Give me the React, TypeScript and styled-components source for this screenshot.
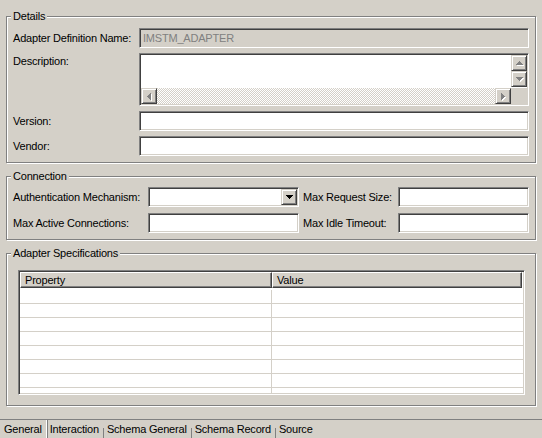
import styled, { createGlobalStyle } from 'styled-components';

const GlobalStyle = createGlobalStyle`
  html, body {
    margin: 0;
    padding: 0;
    background: #d4d0c8;
  }
  body {
    font-family: "Liberation Sans", Arial, sans-serif;
    font-size: 11px;
    letter-spacing: -0.2px;
    color: #000;
  }
`;

type Dir = 'up' | 'down' | 'left' | 'right';

const Arrow = ({ dir, color }: { dir: Dir; color: string }) => {
  const vertical = dir === 'up' || dir === 'down';
  const rects = [1, 3, 5, 7].map((w, i) => {
    const idx = dir === 'up' || dir === 'left' ? i : 3 - i;
    const off = (7 - w) / 2;
    return vertical ? (
      <rect key={i} x={off} y={idx} width={w} height={1} />
    ) : (
      <rect key={i} x={idx} y={off} width={1} height={w} />
    );
  });
  return (
    <svg
      width={vertical ? 7 : 4}
      height={vertical ? 4 : 7}
      viewBox={vertical ? '0 0 7 4' : '0 0 4 7'}
      fill={color}
      shapeRendering="crispEdges"
    >
      {rects}
    </svg>
  );
};

const rows = Array.from({ length: 8 });

const App = () => {
  return (
    <Page>
      <GlobalStyle />
      <Content>
        <Group $height={147}>
          <Caption>Details</Caption>
          <DetailsForm>
            <Label>Adapter Definition Name:</Label>
            <Field $disabled>IMSTM_ADAPTER</Field>
            <Label $top>Description:</Label>
            <Memo>
              <MemoText />
              <VScroll>
                <ScrollButton>
                  <Arrow dir="up" color="#808080" />
                </ScrollButton>
                <ScrollButton>
                  <Arrow dir="down" color="#808080" />
                </ScrollButton>
              </VScroll>
              <HScroll>
                <ScrollButton>
                  <Arrow dir="left" color="#808080" />
                </ScrollButton>
                <Track />
                <ScrollButton>
                  <Arrow dir="right" color="#808080" />
                </ScrollButton>
              </HScroll>
              <Corner />
            </Memo>
            <Label>Version:</Label>
            <Field />
            <Label>Vendor:</Label>
            <Field />
          </DetailsForm>
        </Group>

        <Group $height={64}>
          <Caption>Connection</Caption>
          <ConnectionForm>
            <Label>Authentication Mechanism:</Label>
            <Combo>
              <DropButton>
                <Arrow dir="down" color="#000" />
              </DropButton>
            </Combo>
            <Label $indent>Max Request Size:</Label>
            <Field />
            <Label>Max Active Connections:</Label>
            <Field />
            <Label $indent>Max Idle Timeout:</Label>
            <Field />
          </ConnectionForm>
        </Group>

        <Group $height={153}>
          <Caption>Adapter Specifications</Caption>
          <SpecsBody>
            <Table>
              <HeaderRow>
                <HeaderCell>Property</HeaderCell>
                <HeaderCell>Value</HeaderCell>
              </HeaderRow>
              <TableBody>
                {rows.map((_, i) => (
                  <Row key={i}>
                    <Cell $divider />
                    <Cell />
                  </Row>
                ))}
              </TableBody>
            </Table>
          </SpecsBody>
        </Group>
      </Content>

      <TabBar>
        <Tab $active>General</Tab>
        <Tab>Interaction</Tab>
        <TabSep />
        <Tab>Schema General</Tab>
        <TabSep />
        <Tab>Schema Record</Tab>
        <TabSep />
        <Tab>Source</Tab>
      </TabBar>
    </Page>
  );
};

export default App;

const Page = styled.div`
  width: 542px;
  height: 438px;
  display: flex;
  flex-direction: column;
  overflow: hidden;
`;

const Content = styled.div`
  flex: 1;
  display: flex;
  flex-direction: column;
  gap: 13px;
  padding: 16px 6px 0 6px;
`;

const Group = styled.section<{ $height: number }>`
  position: relative;
  box-sizing: border-box;
  height: ${(p) => p.$height}px;
  border: 1px solid #808080;
  box-shadow: inset 1px 1px 0 #fff, 1px 1px 0 #fff;
`;

const Caption = styled.span`
  position: absolute;
  top: -7px;
  left: 4px;
  padding: 0 2px;
  line-height: 13px;
  background: #d4d0c8;
  white-space: nowrap;
`;

const DetailsForm = styled.div`
  display: grid;
  grid-template-columns: 126px 1fr;
  grid-template-rows: 20px 53px 20px 20px;
  row-gap: 5px;
  padding: 11px 6px 6px 6px;
`;

const ConnectionForm = styled.div`
  display: grid;
  grid-template-columns: 135px 151px 99px 1fr;
  grid-template-rows: 20px 20px;
  row-gap: 6px;
  padding: 10px 6px 6px 6px;
`;

const Label = styled.div<{ $top?: boolean; $indent?: boolean }>`
  display: flex;
  align-items: ${(p) => (p.$top ? 'flex-start' : 'center')};
  padding-top: ${(p) => (p.$top ? '2px' : '0')};
  padding-left: ${(p) => (p.$indent ? '4px' : '0')};
  line-height: 13px;
  white-space: nowrap;
`;

const sunken = `
  box-sizing: border-box;
  border: 1px solid;
  border-color: #808080 #fff #fff #808080;
  box-shadow: inset 1px 1px 0 #404040, inset -1px -1px 0 #d4d0c8;
`;

const raised = `
  box-sizing: border-box;
  border: 1px solid;
  border-color: #d4d0c8 #404040 #404040 #d4d0c8;
  box-shadow: inset 1px 1px 0 #fff, inset -1px -1px 0 #808080;
  background: #d4d0c8;
`;

const Field = styled.div<{ $disabled?: boolean }>`
  ${sunken}
  display: flex;
  align-items: center;
  padding: 0 3px;
  background: ${(p) => (p.$disabled ? '#d4d0c8' : '#fff')};
  color: ${(p) => (p.$disabled ? '#808080' : '#000')};
  white-space: nowrap;
`;

const Memo = styled.div`
  ${sunken}
  display: grid;
  grid-template-columns: 1fr 16px;
  grid-template-rows: 1fr 16px;
  padding: 1px;
  background: #fff;
`;

const MemoText = styled.div`
  background: #fff;
`;

const VScroll = styled.div`
  display: flex;
  flex-direction: column;
`;

const HScroll = styled.div`
  display: flex;
`;

const Track = styled.div`
  flex: 1;
  background: repeating-conic-gradient(#fff 0 25%, #d4d0c8 0 50%) 0 0 / 2px 2px;
`;

const Corner = styled.div`
  background: #d4d0c8;
`;

const ScrollButton = styled.div`
  ${raised}
  width: 16px;
  height: 16px;
  flex-shrink: 0;
  display: flex;
  align-items: center;
  justify-content: center;

  svg {
    filter: drop-shadow(1px 1px 0 #fff);
  }
`;

const Combo = styled.div`
  ${sunken}
  display: flex;
  justify-content: flex-end;
  padding: 1px;
  background: #fff;
`;

const DropButton = styled.div`
  ${raised}
  width: 16px;
  height: 16px;
  display: flex;
  align-items: center;
  justify-content: center;
`;

const SpecsBody = styled.div`
  box-sizing: border-box;
  height: 100%;
  padding: 16px 10px 10px 11px;
`;

const Table = styled.div`
  ${sunken}
  height: 100%;
  padding: 1px;
  display: flex;
  flex-direction: column;
  background: #fff;
  overflow: hidden;
`;

const HeaderRow = styled.div`
  display: grid;
  grid-template-columns: 252px 250px 1fr;
  height: 16px;
  flex-shrink: 0;
`;

const HeaderCell = styled.div`
  box-sizing: border-box;
  border: 1px solid;
  border-color: #fff #404040 #404040 #fff;
  box-shadow: inset -1px -1px 0 #808080;
  background: #d4d0c8;
  padding-left: 4px;
  line-height: 14px;
  white-space: nowrap;
`;

const TableBody = styled.div`
  flex: 1;
  padding-top: 2px;
  overflow: hidden;
`;

const Row = styled.div`
  display: grid;
  grid-template-columns: 252px 1fr;
  height: 14px;
`;

const Cell = styled.div<{ $divider?: boolean }>`
  box-sizing: border-box;
  border-bottom: 1px solid #d4d0c8;
  border-right: ${(p) => (p.$divider ? '1px solid #d4d0c8' : 'none')};
`;

const TabBar = styled.div`
  box-sizing: border-box;
  height: 19px;
  flex-shrink: 0;
  display: flex;
  border-top: 1px solid #808080;
`;

const Tab = styled.div<{ $active?: boolean }>`
  box-sizing: border-box;
  padding: 0 4px 0 ${(p) => (p.$active ? '4px' : '3px')};
  line-height: 18px;
  white-space: nowrap;
  border-right: ${(p) => (p.$active ? '1px solid #fff' : 'none')};
  box-shadow: ${(p) => (p.$active ? '1px 0 0 #808080' : 'none')};
`;

const TabSep = styled.span`
  align-self: flex-end;
  width: 1px;
  height: 10px;
  background: #808080;
`;
